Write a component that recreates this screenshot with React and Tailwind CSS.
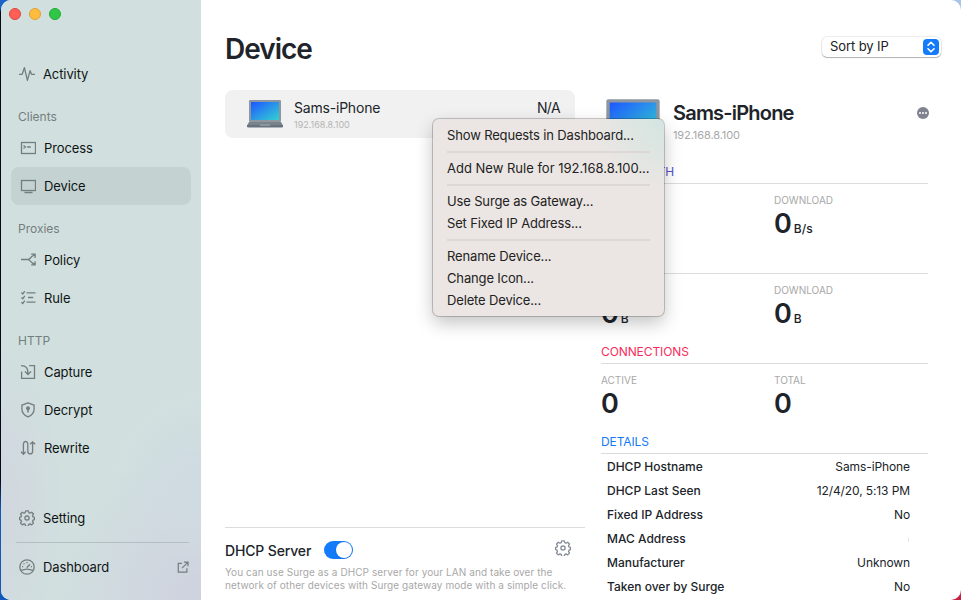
import React from 'react';

const stroke = { fill: 'none', stroke: 'currentColor', strokeWidth: 1.3 };

function Svg({ children, className = 'w-4 h-4' }) {
  return (
    <svg viewBox="0 0 16 16" className={`${className} shrink-0`} {...stroke}>
      {children}
    </svg>
  );
}

const ActivityIcon = () => (
  <Svg><path d="M0 8.3h3.2L5.4 1.7 8.4 14.4 11.1 4.7 12.5 8.3H16" strokeLinejoin="round" /></Svg>
);
const ProcessIcon = () => (
  <Svg>
    <rect x="1.5" y="2.5" width="14" height="11" />
    <path d="M3.5 5.4 5.5 7 3.5 8.6M7.2 7h3.6" />
  </Svg>
);
const DeviceIcon = () => (
  <Svg>
    <rect x="1.5" y="2.5" width="14" height="10" />
    <path d="M4.5 14.5h8" />
  </Svg>
);
const PolicyIcon = () => (
  <Svg>
    <path d="M1 7.500h7.200M14.800 3.200C10.500 4 10.200 7.500 8 7.500c2.200 0 2.500 3.800 6.800 4.500M11.200 2.200h3.900v3.700M11.200 12.900h3.900V9.200" />
  </Svg>
);
const RuleIcon = () => (
  <Svg>
    <path d="M6.500 2.800H15.500M8 7.500h5.200M6.500 12.200H15.500M1.400 2.600 2.800 3.900 4.800 1.100M1.400 7.400 2.800 8.700 4.800 5.900M1.400 12.200l1.400 1.300 2-2.800" />
  </Svg>
);
const CaptureIcon = () => (
  <Svg>
    <path d="M1.600 7.500v6.900h12.900V1.600H9.200M1 1.600c5 0 7 2 7 8.400M4.900 7.400 8 10.500l3.100-3.100" />
  </Svg>
);
const DecryptIcon = () => (
  <Svg>
    <path d="M8 .8 14.100 3.100v4.200c0 3.600-2.400 6-6.100 7.600-3.700-1.600-6.100-4-6.100-7.600V3.100z" strokeLinejoin="round" />
    <circle cx="8" cy="6.300" r="1.300" fill="currentColor" />
    <path d="M8 7v3.400" strokeWidth="1.600" />
  </Svg>
);
const RewriteIcon = () => (
  <Svg>
    <path d="M3.400 14V4.200c0-3.600 4.400-3.600 4.400 0v7c0 3.600 4.800 3.600 4.800 0V2M1 11.800l2.400 2.400 2.200-2.400M10.200 4.200 12.600 1.800l2.600 2.400" />
  </Svg>
);
const GearIcon = ({ className }) => (
  <Svg className={className}>
    <path
      strokeLinejoin="round"
      d="M6.700.8h2.600l.5 1.900 1.200.5 1.700-1 1.800 1.800-1 1.700.5 1.200 1.400.4v2.400l-1.400.5-.5 1.200 1 1.700-1.800 1.800-1.700-1-1.200.5-.5 1.900H6.700l-.5-1.900-1.200-.5-1.700 1-1.800-1.800 1-1.700L2 10.200.6 9.700V7.300L2 6.900l.5-1.200-1-1.700 1.800-1.800 1.700 1 1.200-.5z"
    />
    <circle cx="8" cy="8.1" r="2.1" />
  </Svg>
);
const DashboardIcon = () => (
  <Svg>
    <circle cx="8" cy="8" r="7.200" />
    <path d="M1.500 11.200c3 .2 3.600-1.100 6.500-1.100s3.500 1.300 6.500 1.100M7.700 8.800 11 5.200" />
    <path d="M3 7.600h1.200M4.600 4.500l.8.8M8 3v1.200M11.800 7.600H13" />
  </Svg>
);
const ExternalIcon = () => (
  <Svg className="w-3 h-3">
    <path strokeWidth="1.600" d="M6.500 3.200H1.700v11.500h11.500V9.500M6.700 9.500 14.700 1.400M9.200 1.400h5.500V7" />
  </Svg>
);

function Laptop({ className, id }) {
  return (
    <svg viewBox="0 0 36 28" className={`${className} shrink-0`}>
      <defs>
        <linearGradient id={id} x1="0" y1="0" x2="1" y2="1">
          <stop offset="0.05" stopColor="#1f5cff" />
          <stop offset="0.55" stopColor="#2b9be6" />
          <stop offset="1" stopColor="#31d0d2" />
        </linearGradient>
      </defs>
      <rect x="2" y="0" width="32" height="22" rx="1.2" fill="#8e979f" />
      <rect x="4" y="2" width="28" height="18" fill={`url(#${id})`} />
      <path d="M2 22h32l2 3.500H0z" fill="#79838c" />
      <path d="M0 25h36v1.300q0 1.200-1.500 1.200h-33Q0 27.500 0 26.300z" fill="#66727d" />
      <path d="M13.500 24h9l.8 2H12.700z" fill="#8c969e" />
    </svg>
  );
}

function NavItem({ icon: Icon, label, active, outer, children }) {
  return (
    <div
      className={`flex h-[38px] items-center rounded-lg text-[13px] tracking-[-0.1px] text-[#101414] ${outer ? 'pl-2 pr-0.5' : 'pl-[9px]'} ${active ? 'bg-[#c4d3d2]' : ''}`}
    >
      <span className="mr-2 flex text-[#737e7e]"><Icon /></span>
      <span className="pt-0.5">{label}</span>
      {children}
    </div>
  );
}

const NavLabel = ({ children }) => (
  <div className="h-9 pl-[7px] pt-[15px] text-[12px] leading-[18px] text-[#737e7e]">{children}</div>
);

function Sidebar() {
  return (
    <aside className="flex h-[600px] w-[200px] shrink-0 flex-col bg-[#d1e0df] bg-[radial-gradient(circle_at_100%_80%,#cfdae1_0,#cfdae100_90px),radial-gradient(circle_at_100%_100%,#cfd1df_0,#cfd1df00_150px),radial-gradient(ellipse_at_0%_84%,#d1d7df_0,#d1d7df00_70px)] px-2.5">
      <div className="flex h-[55px] gap-2 pt-2">
        <span className="-ml-0.5 size-3 rounded-full border border-[#e0443e] bg-[#ff5f57]" />
        <span className="size-3 rounded-full border border-[#dea035] bg-[#febc3f]" />
        <span className="size-3 rounded-full border border-[#1faa35] bg-[#2fc745]" />
      </div>
      <NavItem icon={ActivityIcon} label="Activity" outer />
      <NavLabel>Clients</NavLabel>
      <NavItem icon={ProcessIcon} label="Process" />
      <NavItem icon={DeviceIcon} label="Device" active />
      <NavLabel>Proxies</NavLabel>
      <NavItem icon={PolicyIcon} label="Policy" />
      <NavItem icon={RuleIcon} label="Rule" />
      <NavLabel>HTTP</NavLabel>
      <NavItem icon={CaptureIcon} label="Capture" />
      <NavItem icon={DecryptIcon} label="Decrypt" />
      <NavItem icon={RewriteIcon} label="Rewrite" />
      <div className="mt-8">
        <NavItem icon={GearIcon} label="Setting" outer />
        <div className="mb-[5px] ml-[5px] mr-0.5 mt-[5px] h-px bg-[#b3bec0]" />
        <NavItem icon={DashboardIcon} label="Dashboard" outer>
          <span className="ml-auto text-[#737e7e]"><ExternalIcon /></span>
        </NavItem>
      </div>
    </aside>
  );
}

function Stat({ label, value, unit }) {
  return (
    <div className="w-[173px] shrink-0">
      <div className="text-[10px] leading-[14px] text-[#a8a8a8]">{label}</div>
      <div className="mt-px flex items-baseline text-[#20242a]">
        <span className="text-[27px] font-semibold leading-[32px] tracking-[-1px]">{value}</span>
        <span className="ml-[3px] text-[12px] font-medium leading-[16px]">{unit}</span>
      </div>
    </div>
  );
}

function Section({ title, color, stats }) {
  return (
    <section className="h-[90px]">
      <h3 className={`h-[19px] border-b border-[#dcdcdc] text-[12px] leading-[13px] tracking-[-0.1px] ${color}`}>{title}</h3>
      <div className="flex pt-[9px]">
        {stats.map((s) => <Stat key={s[0]} label={s[0]} value={s[1]} unit={s[2]} />)}
      </div>
    </section>
  );
}

const details = [
  ['DHCP Hostname', 'Sams-iPhone'],
  ['DHCP Last Seen', '12/4/20, 5:13 PM'],
  ['Fixed IP Address', 'No'],
  ['MAC Address', ''],
  ['Manufacturer', 'Unknown'],
  ['Taken over by Surge', 'No'],
];

function DetailPane() {
  return (
    <div className="flex w-[327px] flex-col">
      <div className="flex h-[75px] pl-0.5 pt-[9px]">
        <Laptop id="screen-large" className="h-[47px] w-[60px]" />
        <div className="ml-2.5">
          <div className="text-[20px] font-semibold leading-7 tracking-[-0.8px] text-[#20242a]">Sams-iPhone</div>
          <div className="mt-px text-[11px] leading-[14px] tracking-[-0.1px] text-[#a8a8a8]">192.168.8.100</div>
        </div>
        <div className="-mr-px ml-auto mt-2 flex size-3 items-center justify-center gap-px rounded-full bg-[#80838f]">
          <i className="size-0.5 rounded-full bg-white" />
          <i className="size-0.5 rounded-full bg-white" />
          <i className="size-0.5 rounded-full bg-white" />
        </div>
      </div>
      <Section title="BANDWIDTH" color="text-[#5550c8]" stats={[['UPLOAD', '0', 'B/s'], ['DOWNLOAD', '0', 'B/s']]} />
      <Section title="TRAFFIC" color="text-[#34b060]" stats={[['UPLOAD', '0', 'B'], ['DOWNLOAD', '0', 'B']]} />
      <Section title="CONNECTIONS" color="text-[#f72c5b]" stats={[['ACTIVE', '0', ''], ['TOTAL', '0', '']]} />
      <section>
        <h3 className="h-[19px] border-b border-[#dcdcdc] text-[12px] leading-[13px] tracking-[-0.1px] text-[#147bf5]">DETAILS</h3>
        <div className="pl-1.5 pr-[19px] pt-px">
          {details.map(([k, v]) => (
            <div key={k} className="flex h-6 items-center justify-between text-[12px] text-[#20242a]">
              <span className="font-medium">{k}</span>
              {v ? <span className="-mr-px tracking-[-0.1px]">{v}</span> : <span className="h-[5px] w-px bg-[#e8e8e8]" />}
            </div>
          ))}
        </div>
      </section>
    </div>
  );
}

function DeviceList() {
  return (
    <div className="mr-4 flex h-[510px] w-[360px] flex-col">
      <div className="flex h-12 w-[350px] rounded-lg bg-[#f1f1f1] pl-[22px] pr-[15px] pt-2.5">
        <Laptop id="screen-small" className="h-7 w-9" />
        <div className="ml-[11px]">
          <div className="text-[14px] leading-4 tracking-[-0.2px] text-[#20242a]">Sams-iPhone</div>
          <div className="mt-[3px] text-[9px] leading-3 text-[#b4b4b4]">192.168.8.100</div>
        </div>
        <div className="ml-auto text-[14px] leading-4 tracking-[-0.6px] text-[#20242a]">N/A</div>
      </div>
      <div className="mt-auto h-[73px] border-t border-[#dcdcdc]">
        <div className="flex h-[38px] items-center pt-[6px]">
          <span className="w-[99px] text-[14px] font-medium tracking-[-0.15px] text-[#20242a]">DHCP Server</span>
          <span className="flex h-[18px] w-[29px] justify-end overflow-hidden rounded-full bg-[#147bfb] p-px">
            <i className="size-4 rounded-full bg-white shadow-sm" />
          </span>
          <span className="-mt-1 ml-auto mr-3.5 text-[#858a96]"><GearIcon /></span>
        </div>
        <p className="whitespace-nowrap text-[10px] leading-[13px] tracking-[0.08px] text-[#a8a8a8]">
          You can use Surge as a DHCP server for your LAN and take over the<br />
          network of other devices with Surge gateway mode with a simple click.
        </p>
      </div>
    </div>
  );
}

const groups = [
  ['Show Requests in Dashboard...'],
  ['Add New Rule for 192.168.8.100...'],
  ['Use Surge as Gateway...', 'Set Fixed IP Address...'],
  ['Rename Device...', 'Change Icon...', 'Delete Device...'],
];

function ContextMenu() {
  return (
    <div className="absolute left-[433px] top-[119px] h-[197px] w-[231px] rounded-[6px] bg-[#ebe6e3] bg-[radial-gradient(circle_at_100%_0%,#d3e5e1_0,#d3e5e100_72px)] px-3.5 pt-[5px] shadow-[0_0_0_1px_rgba(0,0,0,0.2),0_7px_18px_rgba(0,0,0,0.24)]">
      {groups.map((items, i) => (
        <div key={items[0]}>
          {i > 0 && <div className="flex h-[11px] items-center"><div className="h-0.5 w-full bg-[#ddd8d5]" /></div>}
          {items.map((t) => (
            <div key={t} className={`h-[22px] whitespace-nowrap text-[13px] leading-[22px] text-[#222] ${i === 1 ? '' : 'tracking-[-0.15px]'}`}>{t}</div>
          ))}
        </div>
      ))}
    </div>
  );
}

export default function App() {
  return (
    <div className="relative h-[600px] w-[961px] overflow-hidden bg-[linear-gradient(#1b62c9_8px,#08081a_12px,#08081a_480px,#1258bd_510px)] font-['Inter',sans-serif]">
      <div className="bg-[linear-gradient(to_right,transparent_50%,#a9c4e4_50%)] bg-[length:100%_50%] bg-no-repeat">
        <div className="bg-[linear-gradient(to_right,transparent_50%,#c81f40_50%)] bg-[length:100%_50%] bg-bottom bg-no-repeat pl-px">
          <div className="flex h-[600px] w-[960px] overflow-hidden rounded-[10px] bg-white">
            <Sidebar />
            <main className="flex w-[760px] flex-col pl-6">
              <header className="flex h-[90px] justify-between pr-5">
                <h1 className="pt-[33px] text-[28px] font-semibold leading-8 tracking-[-1px] text-[#20242a]">Device</h1>
                <div className="mt-[37px] flex h-5 w-[119px] items-center justify-between rounded-[5px] bg-white pl-2 pr-0.5 text-[13px] tracking-[-0.1px] text-[#202020] shadow-[0_0_0_0.5px_rgba(0,0,0,0.15),0_1px_1px_rgba(0,0,0,0.25)]">
                  Sort by IP
                  <span className="flex size-4 items-center justify-center rounded bg-[#147bfb] text-white">
                    <svg viewBox="0 0 16 16" className="size-4" fill="none" stroke="currentColor" strokeWidth="1.6" strokeLinecap="round" strokeLinejoin="round">
                      <path d="M5 6.300 8 3.300l3 3M5 9.800l3 3 3-3" />
                    </svg>
                  </span>
                </div>
              </header>
              <div className="flex">
                <DeviceList />
                <DetailPane />
              </div>
            </main>
          </div>
        </div>
      </div>
      <ContextMenu />
    </div>
  );
}
